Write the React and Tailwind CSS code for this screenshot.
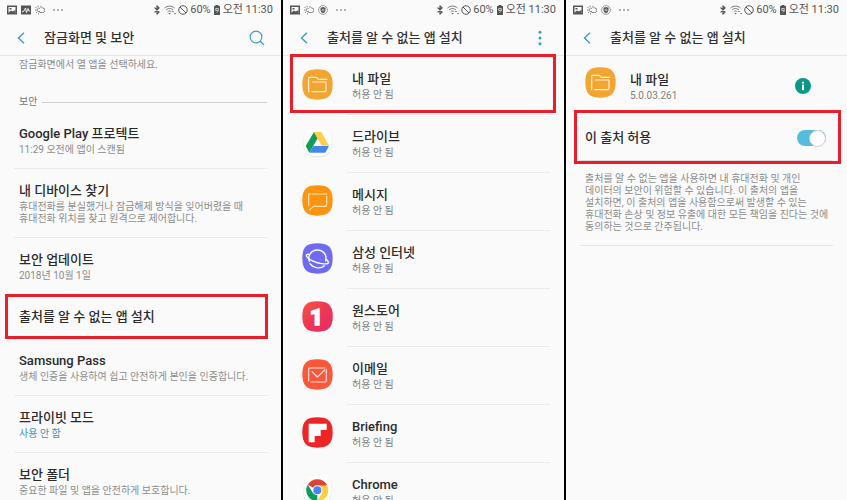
import React from "react";
import { Bluetooth } from "lucide-react";

function PictureIcon() {
  return (
    <svg className="size-2.5" viewBox="0 0 20 20" aria-hidden="true">
      <path fill="#555" fillRule="evenodd" d="M0 1h20v18H0zM3 4v12h14V4z" />
      <path fill="#555" d="M3 15l5-4 3 2 6-3v6H3zM5 6h4v3H5z" />
    </svg>
  );
}

function GraphIcon() {
  return (
    <svg className="size-2.5" viewBox="0 0 20 20" aria-hidden="true">
      <rect x="0" y="1" width="20" height="18" fill="#555" />
      <path fill="none" stroke="#fff" strokeWidth="1.800" d="M2 14l4-2 3-6 2 9 3-8 2 5h2" />
    </svg>
  );
}

function WeatherIcon() {
  return (
    <svg className="size-2.5" viewBox="0 0 20 20" aria-hidden="true" fill="none" stroke="#666" strokeWidth="1.600">
      <path d="M9 15h6a4.500 4.500 0 0 0 .5-9 4.500 4.500 0 0 0-5.500-2" />
      <path d="M9.500 7a3.500 3.500 0 1 0 .5 5.500M6 1.500V4M1 4l2 2M0 10h2.500M2 16l2-2M7 16.500V19" />
    </svg>
  );
}

function ShieldIcon() {
  return (
    <svg className="size-2.5" viewBox="0 0 20 20" aria-hidden="true">
      <circle cx="10" cy="10" r="8.800" fill="none" stroke="#777" strokeWidth="1.400" />
      <path fill="#555" d="M10 4l5 1.500v4.500c0 3-2 5-5 6.500-3-1.500-5-3.500-5-6.500V5.500z" />
      <path fill="none" stroke="#ddd" strokeWidth="1.200" d="M8 8.500h4v3H8z" />
    </svg>
  );
}

function WifiIcon() {
  return (
    <svg className="h-2.5 w-3" viewBox="0 0 24 20" aria-hidden="true" fill="none" stroke="#666" strokeWidth="1.800">
      <path d="M1 6c6-5 14-5 20 0M4 10c4-4 10-4 14 0M7.500 13.500c2-2 5-2 7 0" />
      <path fill="#666" stroke="none" d="M11 19l-2.500-3h5zM18 11l2 3h-4zM22 19l-2-3h4z" />
    </svg>
  );
}

function BlockedIcon() {
  return (
    <svg className="size-2.5" viewBox="0 0 20 20" aria-hidden="true" fill="none" stroke="#555" strokeWidth="2">
      <circle cx="10" cy="10" r="8.500" />
      <path d="M4 4l12 12" />
    </svg>
  );
}

function BatteryIcon() {
  return (
    <svg className="h-2.5 w-2" viewBox="0 0 16 20" aria-hidden="true">
      <path fill="#555" d="M5 0h6v2h3v18H2V2h3z" />
      <path fill="none" stroke="#fafafa" strokeWidth="1.400" d="M5.500 7h5v5l-3 3M5.500 7v4h4" />
    </svg>
  );
}

function StatusBar({ notifications }) {
  return (
    <div className="flex h-5 items-center justify-between pl-[7px] pr-2 text-[11px] leading-4 text-[#555]">
      <div className="flex items-center gap-1">
        {notifications}
        <svg className="ml-1 h-2.5 w-2.5" viewBox="0 0 20 20" fill="#555" aria-hidden="true">
          <circle cx="2" cy="10" r="1.600" />
          <circle cx="10" cy="10" r="1.600" />
          <circle cx="18" cy="10" r="1.600" />
        </svg>
      </div>
      <div className="flex items-center gap-0.5">
        <Bluetooth className="size-2.5" strokeWidth={3} aria-hidden="true" />
        <WifiIcon />
        <BlockedIcon />
        <span>60%</span>
        <BatteryIcon />
        <span>오전 11:30</span>
      </div>
    </div>
  );
}

function Header({ title, action }) {
  return (
    <header className="flex h-9 items-center border-b border-[#e6e6e6] pl-4 pr-4">
      <button type="button" aria-label="뒤로" className="flex w-7 items-center">
        <svg className="h-3 w-2.5" viewBox="0 0 20 24" fill="none" stroke="#3c9dbd" strokeWidth="2.800" aria-hidden="true">
          <path d="M16 1.500L5 12l11 10.500" />
        </svg>
      </button>
      <h1 className="flex-1 text-[13px] leading-5 font-medium text-[#303030]">{title}</h1>
      {action}
    </header>
  );
}

function Phone({ notifications, title, action, children }) {
  return (
    <section className="min-w-0 overflow-hidden bg-[#fafafa]">
      <StatusBar notifications={notifications} />
      <Header title={title} action={action} />
      {children}
    </section>
  );
}

const titleText = "block text-[13px] leading-5 font-medium text-[#2b2b2b]";
const subText = "block text-[10px] leading-3 break-keep";

const settings = [
  { title: "Google Play 프로텍트", sub: "11:29 오전에 앱이 스캔됨" },
  {
    title: "내 디바이스 찾기",
    sub: "휴대전화를 분실했거나 잠금해제 방식을 잊어버렸을 때 휴대전화 위치를 찾고 원격으로 제어합니다.",
  },
  { title: "보안 업데이트", sub: "2018년 10월 1일" },
  { title: "출처를 알 수 없는 앱 설치", marked: true },
  { title: "Samsung Pass", sub: "생체 인증을 사용하여 쉽고 안전하게 본인을 인증합니다." },
  { title: "프라이빗 모드", sub: "사용 안 함", active: true },
  { title: "보안 폴더", sub: "중요한 파일 및 앱을 안전하게 보호합니다." },
];

function SecurityList() {
  return (
    <main className="px-3.5 pt-[3px]">
      <p className={`${subText} pl-[5px] text-[#8c8c8c]`}>잠금화면에서 열 앱을 선택하세요.</p>
      <div className="mt-[21px] flex items-center gap-[5px] pl-[5px]">
        <h2 className="text-[10px] leading-5 text-[#777]">보안</h2>
        <span className="h-px flex-1 bg-[#cfcfcf]" />
      </div>
      <ul>
        {settings.map((item) => (
          <li key={item.title} className="relative border-b border-[#ebebeb]">
            <button
              type="button"
              className={`block w-full pl-[5px] pt-3 text-left ${item.marked ? "pb-[11px]" : "pb-3"}`}
            >
              <span className={titleText}>{item.title}</span>
              {item.sub && (
                <span className={`${subText} pr-4 ${item.active ? "text-[#3c93b3]" : "text-[#8c8c8c]"}`}>{item.sub}</span>
              )}
            </button>
            {item.marked && (
              <span className="pointer-events-none absolute -top-px -right-px -bottom-px -left-[9px] border-3 border-[#e81e2a]" />
            )}
          </li>
        ))}
      </ul>
    </main>
  );
}

function Tile({ fill, children }) {
  return (
    <svg className="size-[31px] shrink-0" viewBox="0 0 93 93" aria-hidden="true">
      <path
        fill={fill}
        d="M46 1C79 1 92 13 92 46S79 92 46 92 1 79 1 46 13 1 46 1z"
      />
      {children}
    </svg>
  );
}

function WhiteTile({ children }) {
  return (
    <svg className="size-[31px] shrink-0" viewBox="0 0 93 93" aria-hidden="true">
      <path fill="#e6e6e6" d="M46 6C77 6 89 17 89 48S77 91 46 91 4 79 4 48 15 6 46 6z" />
      <path fill="#fff" d="M46 4C76 4 88 16 88 46S76 88 46 88 5 76 5 46 16 4 46 4z" />
      {children}
    </svg>
  );
}

const line = { fill: "none", stroke: "#fff", strokeWidth: 3.5, strokeLinejoin: "round", strokeLinecap: "round" };

function FilesIcon() {
  return (
    <Tile fill="#f3a431">
      <g {...line} stroke="#fff3dc">
        <path d="M20 68V25h23l6 6h26" />
        <path d="M29 68h38q5 0 5-5V39H32" />
      </g>
    </Tile>
  );
}

function DriveIcon() {
  return (
    <WhiteTile>
      <path fill="#109d58" d="M36 15L11 57l11 20 25-43z" />
      <path fill="#ffcf48" d="M36 15h22l23 41H59z" />
      <path fill="#4587f0" d="M34 57h47L70 77H22z" />
    </WhiteTile>
  );
}

function MessagesIcon() {
  return (
    <Tile fill="#fd9410">
      <g {...line} stroke="#ffe6b5">
        <path d="M20 62V27h54M74 34v24q0 6-6 6H35L22 75" />
      </g>
    </Tile>
  );
}

function InternetIcon() {
  return (
    <Tile fill="#6f6bf0">
      <g {...line} strokeWidth="4">
        <path d="M22 55C16 36 29 21 46 21c18 0 30 15 25 33" />
        <path d="M21 34c-8-1-10 3-6 8 7 9 27 18 44 20 14 2 21 0 20-4 0-3-3-7-7-9" />
        <path d="M24 62c10 14 32 17 43 6" />
      </g>
    </Tile>
  );
}

function OneStoreIcon() {
  return (
    <svg className="size-[31px] shrink-0" viewBox="0 0 93 93" role="img" aria-label="원스토어">
      <defs>
        <linearGradient id="one" x1="0" y1="0" x2="1" y2="1">
          <stop offset="0" stopColor="#f2583f" />
          <stop offset="1" stopColor="#ec1468" />
        </linearGradient>
      </defs>
      <path fill="url(#one)" d="M46 1C79 1 92 13 92 46S79 92 46 92 1 79 1 46 13 1 46 1z" />
      <path fill="#e93a5e" opacity=".5" d="M46 46L82 13c7 7 10 18 10 33 0 33-13 46-46 46-16 0-27-3-34-9z" />
      <text
        x="43"
        y="72"
        textAnchor="middle"
        fontSize="68"
        fontWeight="900"
        fill="#fff"
        stroke="#fff"
        strokeWidth="4"
        strokeLinejoin="round"
      >
        1
      </text>
    </svg>
  );
}

function EmailIcon() {
  return (
    <Tile fill="#fb573b">
      <g {...line} stroke="#ffe3dc">
        <path d="M20 66V27h49M27 69h42q4 0 4-4V31" />
        <path d="M30 38l16 16 22-21" />
      </g>
    </Tile>
  );
}

function BriefingIcon() {
  return (
    <Tile fill="#ef2427">
      <path fill="#fff" d="M20 20h54v19H56v18H38v19H20z" />
    </Tile>
  );
}

function ChromeIcon() {
  return (
    <WhiteTile>
      <path fill="#db4437" d="M46 46L17.400 29.500A33 33 0 0 1 74.600 29.500L60 46z" />
      <path fill="#0f9d58" d="M46 46v33A33 33 0 0 1 17.400 29.500L33 54z" />
      <path fill="#ffcd40" d="M46 31.500h29.600A33 33 0 0 1 46 79l14-26z" />
      <circle cx="46" cy="46" r="15" fill="#fff" />
      <circle cx="46" cy="46" r="12" fill="#4285f4" />
    </WhiteTile>
  );
}

const apps = [
  { name: "내 파일", Icon: FilesIcon, marked: true },
  { name: "드라이브", Icon: DriveIcon },
  { name: "메시지", Icon: MessagesIcon },
  { name: "삼성 인터넷", Icon: InternetIcon },
  { name: "원스토어", Icon: OneStoreIcon },
  { name: "이메일", Icon: EmailIcon },
  { name: "Briefing", Icon: BriefingIcon },
  { name: "Chrome", Icon: ChromeIcon },
];

function AppList() {
  return (
    <main className="pt-px">
      <ul>
        {apps.map(({ name, Icon, marked }) => (
          <li key={name} className="relative">
            <button type="button" className="flex w-full items-start gap-3.5 pl-[19px] pr-3.5 text-left">
              <span className="pt-3">
                <Icon />
              </span>
              <span className="flex-1 border-b border-[#ebebeb] pt-3 pb-[13px] pl-[5px]">
                <span className={titleText}>{name}</span>
                <span className={`${subText} text-[#808080]`}>허용 안 됨</span>
              </span>
            </button>
            {marked && (
              <span className="pointer-events-none absolute -top-[3px] right-2 bottom-0.5 left-[7px] border-3 border-[#e81e2a]" />
            )}
          </li>
        ))}
      </ul>
    </main>
  );
}

function SourceDetail() {
  return (
    <main className="px-3.5 pt-[11px]">
      <div className="flex items-start pl-[5px]">
        <FilesIcon />
        <div className="flex-1 pt-[3px] pl-3.5">
          <span className={titleText}>내 파일</span>
          <span className={`${subText} text-[#808080]`}>5.0.03.261</span>
        </div>
        <button type="button" aria-label="앱 정보" className="mt-[11px] mr-[22px]">
          <svg className="size-4" viewBox="0 0 48 48" aria-hidden="true">
            <circle cx="24" cy="24" r="24" fill="#079887" />
            <circle cx="24" cy="14" r="3.500" fill="#fff" />
            <path fill="#fff" d="M21 20h6v17h-6z" />
          </svg>
        </button>
      </div>
      <div className="relative mt-3.5 flex items-center justify-between border-b border-[#ddd] py-3 pr-[7px] pl-[5px]">
        <label htmlFor="allow" className={titleText}>
          이 출처 허용
        </label>
        <input
          id="allow"
          type="checkbox"
          role="switch"
          defaultChecked
          className="h-4 w-[29px] appearance-none rounded-full bg-[#55bce0] before:ml-3 before:block before:size-[17px] before:rounded-full before:border before:border-[#cfcfcf] before:bg-white"
        />
        <span className="pointer-events-none absolute -top-1.5 -right-2 -bottom-1 -left-1.5 border-3 border-[#e81e2a]" />
      </div>
      <p className={`${subText} border-b border-[#e6e6e6] pt-3 pb-3 pl-[5px] text-[#8c8c8c]`}>
        출처를 알 수 없는 앱을 사용하면 내 휴대전화 및 개인 데이터의 보안이 위험할 수 있습니다. 이 출처의 앱을
        설치하면, 이 출처의 앱을 사용함으로써 발생할 수 있는 휴대전화 손상 및 정보 유출에 대한 모든 책임을 진다는 것에
        동의하는 것으로 간주됩니다.
      </p>
    </main>
  );
}

export default function App() {
  return (
    <div
      lang="ko"
      className="grid h-screen grid-cols-3 gap-0.5 overflow-hidden bg-black font-[Roboto,'Noto_Sans_CJK_KR',sans-serif]"
    >
      <Phone
        title="잠금화면 및 보안"
        notifications={
          <>
            <PictureIcon />
            <GraphIcon />
            <WeatherIcon />
          </>
        }
        action={
          <button type="button" aria-label="검색">
            <svg className="size-4" viewBox="0 0 48 48" fill="none" stroke="#3c9dbd" strokeWidth="3.500" aria-hidden="true">
              <circle cx="21" cy="21" r="17.500" />
              <path d="M33 33l12 12" />
            </svg>
          </button>
        }
      >
        <SecurityList />
      </Phone>
      <Phone
        title="출처를 알 수 없는 앱 설치"
        notifications={
          <>
            <PictureIcon />
            <WeatherIcon />
            <ShieldIcon />
          </>
        }
        action={
          <button type="button" aria-label="더보기">
            <svg className="size-4" viewBox="0 0 48 48" fill="#3c9dbd" aria-hidden="true">
              <circle cx="24" cy="7" r="4.500" />
              <circle cx="24" cy="24" r="4.500" />
              <circle cx="24" cy="41" r="4.500" />
            </svg>
          </button>
        }
      >
        <AppList />
      </Phone>
      <Phone
        title="출처를 알 수 없는 앱 설치"
        notifications={
          <>
            <PictureIcon />
            <WeatherIcon />
            <ShieldIcon />
          </>
        }
      >
        <SourceDetail />
      </Phone>
    </div>
  );
}
